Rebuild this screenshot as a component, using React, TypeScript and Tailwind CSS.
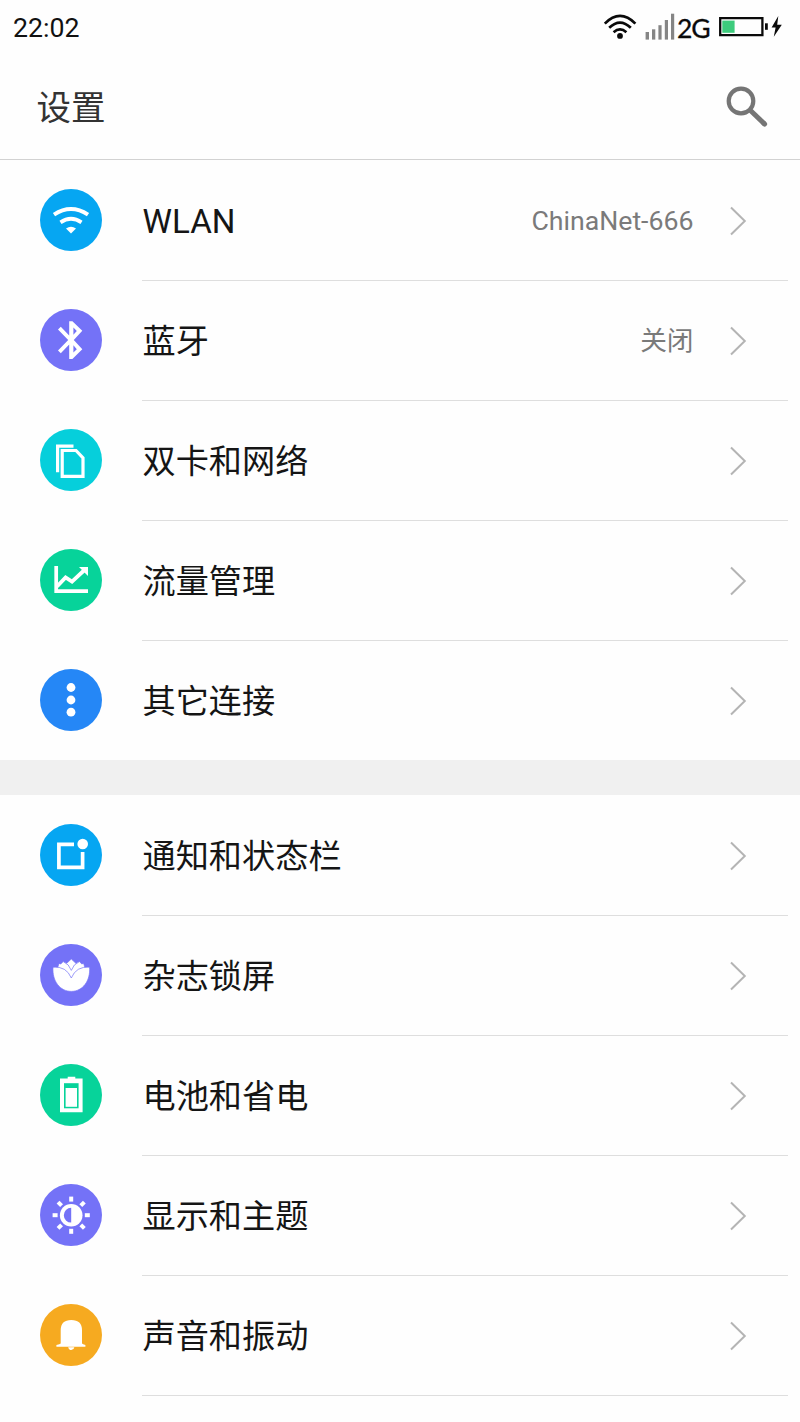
import type { ReactNode } from "react";

const FONT = "font-['Roboto','Noto_Sans_CJK_SC',sans-serif]";

const WifiIcon = (
  <g>
    <path d="M14 25.6Q31 14.4 48 25.6" fill="none" stroke="#fff" strokeWidth="4" />
    <path d="M20.5 33.3Q31 26.3 41.5 33.3" fill="none" stroke="#fff" strokeWidth="3.8" />
    <path d="M26 39.6Q31 35.8 36 39.6L31 44.4Z" fill="#fff" />
  </g>
);

const BluetoothIcon = (
  <path
    d="M29.2 12.3H32.4L42.3 21.7L33.8 31L42.3 40.3L32.4 50H29.2V35.6L20.8 44.2L18 41.4L28.2 31L18 20.6L20.8 17.8L29.2 26.4ZM33.4 18.6V25.8L36.8 21.9ZM33.4 36.2V43.6L36.8 40.2Z"
    fill="#fff"
    fillRule="evenodd"
  />
);

const CardsIcon = (
  <g fill="none" stroke="#fff" strokeWidth="3.2">
    <path d="M33.5 17.2H17.6V43.3" />
    <path d="M22.2 21.5H36L43 29V47.3H22.2Z" />
  </g>
);

const ChartIcon = (
  <g>
    <path d="M16.2 17V42.2H48" fill="none" stroke="#fff" strokeWidth="3.7" />
    <path d="M17 37.5L25.6 28.4L32 32.6L44.5 21" fill="none" stroke="#fff" strokeWidth="3.8" />
    <path d="M39 18H48V27Z" fill="#fff" />
  </g>
);

const MoreIcon = (
  <g fill="#fff">
    <circle cx="31" cy="18.5" r="4.4" />
    <circle cx="31" cy="31" r="4.4" />
    <circle cx="31" cy="43.2" r="4.4" />
  </g>
);

const NotificationIcon = (
  <g>
    <path d="M34 20.3H18.9V43.3H42.6V28" fill="none" stroke="#fff" strokeWidth="3.7" />
    <circle cx="42.7" cy="20" r="5.3" fill="#fff" />
  </g>
);

const LotusIcon = (
  <g fill="#fff" stroke="#7472f7" strokeWidth="0.7">
    <path d="M31.3 15L36.2 19.6L34 26L31.3 29L28.6 26L26.4 19.6Z" />
    <path d="M19 19.4L20.8 19.9L23.2 17.6Q29.2 20 31.3 26.4Q33.4 20 39.4 17.6L41.8 19.9L43.6 19.4L45.4 25L31.3 38L17.2 25Z" />
    <path d="M13 23.2Q26.4 22 31.3 34Q36.2 22 49.6 23.2C50.6 37 42.6 47.4 31.3 47.4C20 47.4 12 37 13 23.2Z" />
  </g>
);

const BatteryIcon = (
  <g>
    <path d="M27.7 12.8H35.3V14.4H42.6V48.2H20V14.4H27.7Z" fill="#fff" />
    <path d="M24 19.2H38.6V44.3H24Z" fill="#07d39a" />
    <path d="M25.6 24H37V42.8H25.6Z" fill="#fff" />
  </g>
);

const BrightnessIcon = (
  <g>
    <circle cx="31.2" cy="31.2" r="11.3" fill="#fff" />
    <path d="M31.2 23.8A7.4 7.4 0 0 0 31.2 38.6Z" fill="#7472f7" />
    {[0, 45, 90, 135, 180, 225, 270, 315].map((a) => (
      <path key={a} d="M31.2 12.6V17.6" stroke="#fff" strokeWidth="4" transform={`rotate(${a} 31.2 31.2)`} />
    ))}
  </g>
);

const BellIcon = (
  <g fill="#fff">
    <path d="M20.7 39.6V26.3Q20.7 16 31.3 16Q42 16 42 26.3V39.6Q42.8 40.6 45.4 41V42.7H16.4V41Q19.9 40.6 20.7 39.6Z" />
    <path d="M28.2 43.2H34.4Q33.8 46 31.3 46Q28.8 46 28.2 43.2Z" />
  </g>
);

type Item = { label: string; color: string; icon: ReactNode; value?: string };

const connections: Item[] = [
  { label: "WLAN", color: "#06a6f2", icon: WifiIcon, value: "ChinaNet-666" },
  { label: "蓝牙", color: "#7472f7", icon: BluetoothIcon, value: "关闭" },
  { label: "双卡和网络", color: "#06cfdb", icon: CardsIcon },
  { label: "流量管理", color: "#07d39a", icon: ChartIcon },
  { label: "其它连接", color: "#2587f6", icon: MoreIcon },
];

const device: Item[] = [
  { label: "通知和状态栏", color: "#06a6f2", icon: NotificationIcon },
  { label: "杂志锁屏", color: "#7472f7", icon: LotusIcon },
  { label: "电池和省电", color: "#07d39a", icon: BatteryIcon },
  { label: "显示和主题", color: "#7472f7", icon: BrightnessIcon },
  { label: "声音和振动", color: "#f6aa20", icon: BellIcon },
];

function Row({ item, first }: { item: Item; first: boolean }) {
  return (
    <li className="flex h-[120px] items-center pl-10 pr-3">
      <svg className="h-[62px] w-[62px] shrink-0" viewBox="0 0 62 62">
        <circle cx="31" cy="31" r="31" fill={item.color} />
        {item.icon}
      </svg>
      <div
        className={`ml-10 flex h-full flex-1 items-center border-t pr-[41px] pt-px ${
          first ? "border-transparent" : "border-[#dedede]"
        }`}
      >
        <span className="flex-1 pl-[0.5px] pt-[2px] text-[33.2px] leading-[48px] text-[#151515]">{item.label}</span>
        {item.value && <span className="mr-[35.5px] text-[26.7px] leading-10 text-[#7a7a7a]">{item.value}</span>}
        <svg className="h-[30px] w-[18px]" viewBox="0 0 18 30" fill="none" stroke="#b4b4b4" strokeWidth="2">
          <path d="M2 1.5L15.8 15L2 28.5" />
        </svg>
      </div>
    </li>
  );
}

function StatusBar() {
  return (
    <div className="flex h-[54px] items-center justify-between pl-[13px]">
      <span className="pt-[2px] text-[26.7px] leading-8 text-[#111]">22:02</span>
      <div className="flex h-full items-center">
        <svg className="h-[54px] w-[74px]" viewBox="603 0 74 54">
          <g fill="none" stroke="#0a0a0a" strokeWidth="2.7">
            <path d="M604.8 23.6Q620 8.2 635.4 23.6" />
            <path d="M609.2 27.8Q620 17.4 630.8 27.8" />
            <path d="M613.6 32.2Q620 26.6 626.4 32.2" />
          </g>
          <circle cx="620" cy="35.9" r="2.9" fill="#0a0a0a" />
          <g fill="#858585">
            <path d="M645.6 32H649V39.6H645.6Z" />
            <path d="M652 29.3H655.3V39.6H652Z" />
            <path d="M658.4 25.2H661.6V39.6H658.4Z" />
            <path d="M664.8 20H668V39.6H664.8Z" />
            <path d="M671 13.7H674.2V39.6H671Z" />
          </g>
        </svg>
        <span className="w-[42px] pt-[2px] font-['Lato',sans-serif] text-[26.5px] leading-8 tracking-[-1px] text-[#0a0a0a] [-webkit-text-stroke:0.3px_#0a0a0a]">
          2G
        </span>
        <svg className="h-[54px] w-[81px]" viewBox="719 0 81 54">
          <path d="M720.2 18.2H762.4V35.2H720.2Z" fill="none" stroke="#0a0a0a" strokeWidth="2.3" />
          <path d="M722.3 20.6H734.6V32.8H722.3Z" fill="#3dcb7c" />
          <path d="M765 23.3H767.8V29.8H765Z" fill="#0a0a0a" />
          <path d="M778.3 16L771.6 27.6H775.6L773.8 36.8L781.8 24.8H777.2Z" fill="#0a0a0a" />
        </svg>
      </div>
    </div>
  );
}

export default function App() {
  return (
    <div className={`h-[1422px] w-[800px] overflow-hidden bg-[#fefefe] ${FONT}`}>
      <header className="h-40 border-b border-[#d2d2d2]">
        <StatusBar />
        <div className="flex h-[105px] items-center justify-between pl-9 pr-8">
          <h1 className="pt-[3px] pl-[0.5px] text-[34.5px] leading-[50px] text-[#333]">设置</h1>
          <svg className="h-[42px] w-[42px]" viewBox="726 86 42 42" fill="none" stroke="#757575">
            <circle cx="741" cy="101" r="12.3" strokeWidth="4.2" />
            <path d="M750.5 110.5L764.5 124" strokeWidth="5" />
            <path d="M764 123.5L764.6 124.1" strokeWidth="5" strokeLinecap="round" />
          </svg>
        </div>
      </header>
      <ul>
        {connections.map((item, i) => (
          <Row key={item.label} item={item} first={i === 0} />
        ))}
      </ul>
      <div className="h-[35px] bg-[#f0f0f0]" />
      <ul>
        {device.map((item, i) => (
          <Row key={item.label} item={item} first={i === 0} />
        ))}
      </ul>
      <div className="ml-[142px] mr-3 border-t border-[#dedede]" />
    </div>
  );
}
